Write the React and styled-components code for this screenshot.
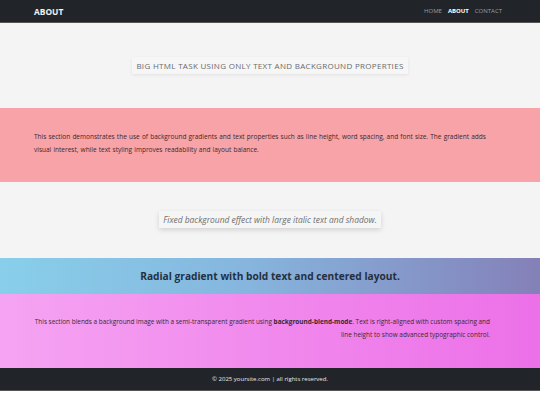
import React from "react";
import styled, { createGlobalStyle } from "styled-components";

const Global = createGlobalStyle`
  html, body { margin: 0; padding: 0; background: #ffffff; }
  body { font-family: "Open Sans", "Noto Sans", sans-serif; }
  * { box-sizing: border-box; }
`;

const Nav = styled.header`
  height: 23px;
  background: #212529;
  display: flex;
  align-items: center;
  justify-content: space-between;
  padding: 0 38px 0 34px;
  border-bottom: 1px solid #555;
`;

const Brand = styled.div`
  color: #f2f2f2;
  font-weight: 700;
  font-size: 8.4px;
`;

const Links = styled.nav`
  display: flex;
  gap: 6px;
`;

const NavLink = styled.a`
  color: ${(p) => (p.$active ? "#ffffff" : "#9a9da0")};
  font-weight: ${(p) => (p.$active ? 700 : 400)};
  font-size: 6px;
  text-decoration: none;
`;

const Hero = styled.section`
  height: 85px;
  background: #f4f4f4;
  display: flex;
  align-items: center;
  justify-content: center;
`;

const HeroTitle = styled.h1`
  margin: 0;
  padding: 3px 4px;
  font-size: 8px;
  letter-spacing: 0.3px;
  font-weight: 400;
  color: #676a6e;
  background: #f6f6f6;
  box-shadow: 0 1px 3px rgba(0, 0, 0, 0.08);
  white-space: nowrap;
`;

const GradientSection = styled.section`
  height: 74px;
  background: #f7a3a7;
  display: flex;
  align-items: center;
  padding: 0 44px 4px 34px;
`;

const Para = styled.p`
  margin: 0;
  font-size: ${(p) => p.$size || "6.3px"};
  line-height: 13px;
  color: #3a2a2e;
  word-spacing: ${(p) => p.$wordSpacing || "0"};
  text-align: ${(p) => p.$align || "left"};
`;

const FixedSection = styled.section`
  height: 76px;
  background: #f4f4f4;
  display: flex;
  align-items: center;
  justify-content: center;
  padding-bottom: 2px;
`;

const ItalicBox = styled.p`
  margin: 0;
  padding: 3px 4px;
  font-style: italic;
  font-size: 8.45px;
  color: #6e6e6e;
  background: #f5f5f5;
  box-shadow: 0 2px 5px rgba(0, 0, 0, 0.14);
  white-space: nowrap;
`;

const RadialSection = styled.section`
  height: 36px;
  background: linear-gradient(to right, #88cfea 0%, #86b6de 45%, #8480b8 100%);
  display: flex;
  align-items: center;
  justify-content: center;
`;

const RadialText = styled.h2`
  margin: 0;
  font-size: 10.2px;
  font-weight: 700;
  color: #243040;
`;

const BlendSection = styled.section`
  height: 74px;
  background: linear-gradient(to right, #f5a4f2, #f084ec 60%, #ec70e8);
  display: flex;
  align-items: center;
  justify-content: flex-end;
  padding: 0 50px 7px 34px;
`;

const Footer = styled.footer`
  height: 23px;
  background: #212529;
  display: flex;
  align-items: center;
  justify-content: center;
  color: #e8e8e8;
  font-size: 6px;
  border-bottom: 1px solid #555;
`;

export default function App() {
  return (
    <>
      <Global />
      <Nav>
        <Brand>ABOUT</Brand>
        <Links>
          <NavLink href="#">HOME</NavLink>
          <NavLink href="#" $active>ABOUT</NavLink>
          <NavLink href="#">CONTACT</NavLink>
        </Links>
      </Nav>
      <Hero>
        <HeroTitle>BIG HTML TASK USING ONLY TEXT AND BACKGROUND PROPERTIES</HeroTitle>
      </Hero>
      <GradientSection>
        <Para $size="6.5px" $wordSpacing="0.5px">
          This section demonstrates the use of background gradients and text properties such as line height, word spacing, and font size. The gradient adds visual interest, while text styling improves readability and layout balance.
        </Para>
      </GradientSection>
      <FixedSection>
        <ItalicBox>Fixed background effect with large italic text and shadow.</ItalicBox>
      </FixedSection>
      <RadialSection>
        <RadialText>Radial gradient with bold text and centered layout.</RadialText>
      </RadialSection>
      <BlendSection>
        <Para $size="6.43px" $align="right">
          This section blends a background image with a semi-transparent gradient using <b>background-blend-mode</b>. Text is right-aligned with custom spacing and line height to show advanced typographic control.
        </Para>
      </BlendSection>
      <Footer>© 2025 yoursite.com | all rights reserved.</Footer>
    </>
  );
}
